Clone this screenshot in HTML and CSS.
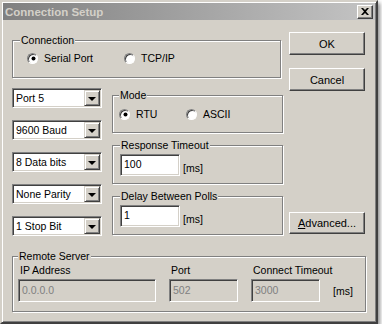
FILE: index.html
```html
<!DOCTYPE html>
<html>
<head>
<meta charset="utf-8">
<link rel="stylesheet" href="styles.css">
</head>
<body>
<div class="window">
  <div class="titlebar">
    <span class="title">Connection Setup</span>
    <span class="close"><svg width="8" height="7" viewBox="0 0 8 7"><path d="M0 0h2l2 2 2-2h2L5 3.5 8 7H6L4 5 2 7H0l3-3.5z" fill="#000"/></svg></span>
  </div>
  <div class="client">
    <div class="main">
      <fieldset class="group conn">
        <legend>Connection</legend>
        <div class="radios">
          <label class="radio wide"><span class="dot on"></span>Serial Port</label>
          <label class="radio"><span class="dot"></span>TCP/IP</label>
        </div>
      </fieldset>

      <div class="buttons">
        <button class="btn">OK</button>
        <button class="btn">Cancel</button>
        <button class="btn adv"><u>A</u>dvanced...</button>
      </div>

      <div class="combos">
        <div class="combo"><span class="val">Port 5</span><span class="drop"><span class="tri"></span></span></div>
        <div class="combo"><span class="val">9600 Baud</span><span class="drop"><span class="tri"></span></span></div>
        <div class="combo"><span class="val">8 Data bits</span><span class="drop"><span class="tri"></span></span></div>
        <div class="combo"><span class="val">None Parity</span><span class="drop"><span class="tri"></span></span></div>
        <div class="combo"><span class="val">1 Stop Bit</span><span class="drop"><span class="tri"></span></span></div>
      </div>

      <div class="groups">
        <fieldset class="group mode">
          <legend>Mode</legend>
          <div class="radios">
            <label class="radio rtu"><span class="dot on"></span>RTU</label>
            <label class="radio"><span class="dot"></span>ASCII</label>
          </div>
        </fieldset>
        <fieldset class="group timing">
          <legend>Response Timeout</legend>
          <div class="field">
            <span class="edit">100</span><span class="unit">[ms]</span>
          </div>
        </fieldset>
        <fieldset class="group timing">
          <legend>Delay Between Polls</legend>
          <div class="field">
            <span class="edit">1</span><span class="unit">[ms]</span>
          </div>
        </fieldset>
      </div>
    </div>

    <fieldset class="group remote">
      <legend>Remote Server</legend>
      <div class="remote-grid">
        <div class="cell">
          <span class="lbl">IP Address</span>
          <span class="edit disabled ip">0.0.0.0</span>
        </div>
        <div class="cell">
          <span class="lbl">Port</span>
          <span class="edit disabled small">502</span>
        </div>
        <div class="cell">
          <span class="lbl">Connect Timeout</span>
          <div class="edit-row">
            <span class="edit disabled small">3000</span><span class="unit2">[ms]</span>
          </div>
        </div>
      </div>
    </fieldset>
  </div>
</div>
</body>
</html>
```

FILE: styles.css
```css
html, body {
  margin: 0;
  padding: 0;
  background: #ffffff;
}
body {
  font-family: "Liberation Sans", Arial, sans-serif;
  font-size: 10.5px;
  color: #000;
}
.window {
  box-sizing: border-box;
  width: 378px;
  height: 324px;
  background: #d4d0c8;
  border: 2px solid;
  border-color: #d4d0c8 #404040 #404040 #d4d0c8;
  box-shadow: inset 1px 1px 0 #fff, inset -1px -1px 0 #808080, 2px 3px 4px rgba(0,0,0,0.45);
  padding: 1px;
}
.titlebar {
  height: 17px;
  background: linear-gradient(to right, #808080, #c4c4c4);
  display: flex;
  align-items: center;
  justify-content: space-between;
  padding: 0 2px 0 2px;
}
.title {
  font-weight: bold;
  font-size: 11.5px;
  color: #d4d0c8;
}
.close {
  box-sizing: border-box;
  width: 16px;
  height: 14px;
  background: #d4d0c8;
  border: 1px solid;
  border-color: #fff #404040 #404040 #fff;
  box-shadow: inset -1px -1px 0 #808080;
  display: flex;
  align-items: center;
  justify-content: center;
}
.client {
  padding: 12px 0 0 9px;
}
.main {
  display: grid;
  grid-template-columns: 100px 177px 76px;
  grid-template-rows: auto auto;
  row-gap: 10px;
}
.group {
  margin: 0;
  padding: 0 7px 8px 7px;
  border: 1px solid #808080;
  box-shadow: 1px 1px 0 #fff, inset 1px 1px 0 #fff;
  min-width: 0;
  box-sizing: border-box;
}
.group legend {
  padding: 0 1px;
  line-height: 14px;
  background: #d4d0c8;
}
.conn {
  grid-column: 1 / 3;
  grid-row: 1;
  width: 269px;
  margin-top: 1px;
  padding: 4px 7px 12px 7px;
}
.radios {
  display: flex;
  align-items: center;
  height: 14px;
}
.conn .radios {
  margin-left: 7px;
}
.radio {
  display: flex;
  align-items: center;
  gap: 6px;
}
.radio.wide {
  width: 97px;
}
.radio.rtu {
  width: 67px;
}
.dot {
  box-sizing: border-box;
  width: 11px;
  height: 11px;
  border-radius: 50%;
  background: #fff;
  border: 1px solid;
  border-color: #808080 #fff #fff #808080;
  box-shadow: inset 1px 1px 0 #404040;
  display: flex;
  align-items: center;
  justify-content: center;
}
.dot.on::after {
  content: "";
  width: 3px;
  height: 3px;
  margin: 1px 0 0 1px;
  border-radius: 50%;
  background: #000;
  box-shadow: 0 0 0 0.5px #000;
}
.buttons {
  grid-column: 3;
  grid-row: 1 / 3;
  display: flex;
  flex-direction: column;
  gap: 13px;
}
.btn {
  box-sizing: border-box;
  width: 76px;
  height: 23px;
  margin: 0;
  padding: 0;
  background: #d4d0c8;
  border: 1px solid;
  border-color: #fff #404040 #404040 #fff;
  box-shadow: inset -1px -1px 0 #808080, inset 1px 1px 0 #d4d0c8;
  font-family: "Liberation Sans", Arial, sans-serif;
  font-size: 11px;
  color: #000;
}
.btn.adv {
  margin-top: auto;
  margin-bottom: 2px;
  height: 22px;
}
.combos {
  grid-column: 1;
  grid-row: 2;
  display: flex;
  flex-direction: column;
  gap: 12px;
}
.combo {
  box-sizing: border-box;
  width: 90px;
  height: 20px;
  background: #fff;
  border: 1px solid;
  border-color: #808080 #fff #fff #808080;
  box-shadow: inset 1px 1px 0 #404040, inset -1px -1px 0 #d4d0c8;
  padding: 1px;
  display: flex;
  align-items: center;
}
.combo .val {
  flex: 1;
  padding-left: 2px;
  white-space: nowrap;
}
.drop {
  box-sizing: border-box;
  width: 16px;
  height: 16px;
  background: #d4d0c8;
  border: 1px solid;
  border-color: #d4d0c8 #404040 #404040 #d4d0c8;
  box-shadow: inset 1px 1px 0 #fff, inset -1px -1px 0 #808080;
  display: flex;
  align-items: center;
  justify-content: center;
}
.tri {
  width: 0;
  height: 0;
  border-left: 4px solid transparent;
  border-right: 4px solid transparent;
  border-top: 4px solid #000;
  margin-top: 1px;
}
.groups {
  grid-column: 2;
  grid-row: 2;
  display: flex;
  flex-direction: column;
  gap: 5px;
  width: 171px;
}
.mode {
  padding: 5px 5px 11px 6px;
}
.timing {
  padding: 2px 7px 7px 7px;
}
.field {
  display: flex;
  align-items: flex-end;
  gap: 3px;
}
.edit {
  box-sizing: border-box;
  width: 60px;
  height: 22px;
  background: #fff;
  border: 1px solid;
  border-color: #808080 #fff #fff #808080;
  box-shadow: inset 1px 1px 0 #404040, inset -1px -1px 0 #d4d0c8;
  padding: 2px 3px;
  line-height: 14px;
  display: block;
}
.unit {
  padding-bottom: 2px;
}
.remote {
  width: 354px;
  margin-top: 13px;
  padding: 0 5px 9px 5px;
}
.remote-grid {
  display: flex;
  gap: 13px;
}
.cell {
  display: flex;
  flex-direction: column;
  gap: 2px;
}
.lbl {
  line-height: 14px;
  padding-left: 2px;
}
.edit.disabled {
  background: #d4d0c8;
  color: #808080;
  height: 23px;
  padding-top: 3px;
}
.edit.ip {
  width: 138px;
}
.edit.small {
  width: 69px;
}
.edit-row {
  display: flex;
  align-items: center;
  gap: 13px;
}
```
